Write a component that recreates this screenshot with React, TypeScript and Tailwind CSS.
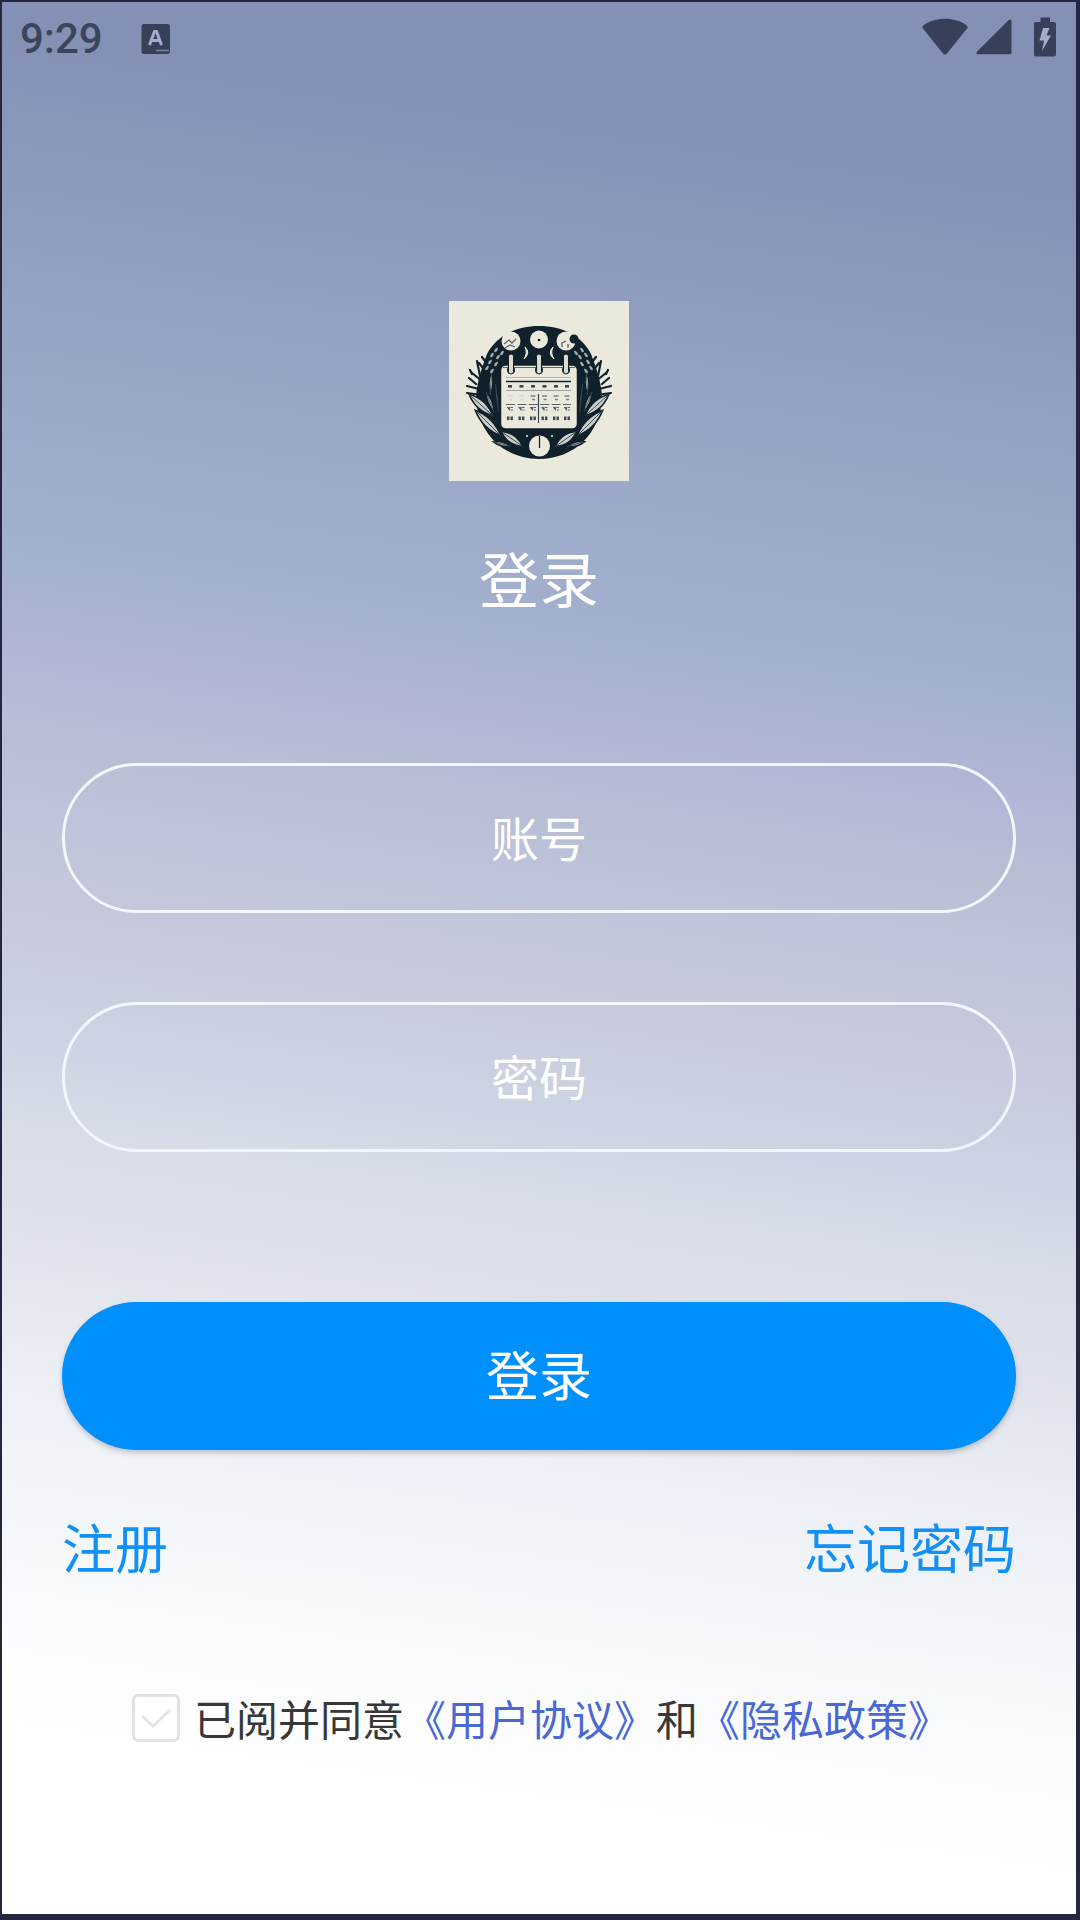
import React, { useState } from 'react';

const AppBadgeIcon: React.FC<React.SVGProps<SVGSVGElement>> = (props) => (
    <svg viewBox="0 0 30 32" fill="none" {...props}>
        <rect x="0.5" y="1" width="28.5" height="30" rx="2.5" fill="#364057" />
        <path d="M8.5 22 L13.5 8.5 H15.5 L20.5 22 M10.5 17.5 H18.5" stroke="#a3acca" strokeWidth="3" />
        <path d="M15 27.5 H28" stroke="#7d88a6" strokeWidth="1.5" />
    </svg>
);

const WifiIcon: React.FC<React.SVGProps<SVGSVGElement>> = (props) => (
    <svg viewBox="0 0 46 38" fill="#374058" {...props}>
        <path d="M1 10.5 C0 9.4 0.2 8.4 1.3 7.5 C13.5 -1.4 32.5 -1.4 44.7 7.5 C45.8 8.4 46 9.4 45 10.5 L25 35.6 C23.8 37 22.2 37 21 35.6 Z" />
    </svg>
);

const SignalIcon: React.FC<React.SVGProps<SVGSVGElement>> = (props) => (
    <svg viewBox="0 0 36 36" fill="#374058" {...props}>
        <path d="M32.5 1.2 C34 -0.2 35.5 0.4 35.5 2.4 V33 C35.5 34.6 34.8 35.3 33.2 35.3 H2.4 C0.4 35.3 -0.2 33.8 1.2 32.4 Z" />
    </svg>
);

const BatteryIcon: React.FC<React.SVGProps<SVGSVGElement>> = (props) => (
    <svg viewBox="0 0 22 40" {...props}>
        <path d="M6.5 0.5 H16 V5 H20 Q22 5 22 7 V37.5 Q22 39.5 20 39.5 H2 Q0 39.5 0 37.5 V7 Q0 5 2 5 H6.5 Z" fill="#374058" />
        <path d="M9 11 H15.5 L12.5 18.5 H17 L8 34 L10 23.5 H5.5 Z" fill="#a3acca" />
    </svg>
);

const LEAVES = [
    // cx, cy, rx, ry, angle
    [32, 104, 4, 16, -48],
    [39, 122, 4, 18, -45],
    [63, 138, 4, 13, -55],
    [41, 101, 2, 11, -22],
    [42, 82, 2, 12, 4],
    [48, 97, 1, 14, -6],
    [53, 143, 2, 9, -75],
];

const TWIGS = [
    'M38 72 L30 62 M33 80 L23 72 M30 88 L18 85 M31 75 L28 60 M27 83 L20 77 M33 94 L18 92',
    'M36 60 L33 56 M23 73 L21 69',
];

const GRAIN = [[47, 49], [43, 54], [49, 56], [41, 61], [47, 63], [38, 67], [43, 70], [53, 52]];

const LogoSide: React.FC = () => (
    <g>
        {TWIGS.map((d) => (
            <path key={d} d={d} stroke="#10212c" strokeWidth="2.2" strokeLinecap="round" fill="none" />
        ))}
        {LEAVES.map(([cx, cy, rx, ry, angle]) => (
            <g key={`${cx}-${cy}`} transform={`rotate(${angle} ${cx} ${cy})`}>
                <path
                    d={`M${cx} ${cy - ry} Q${cx + rx * 2} ${cy} ${cx} ${cy + ry} Q${cx - rx * 2} ${cy} ${cx} ${cy - ry} Z`}
                    fill="#c9cec8"
                    stroke="#10212c"
                    strokeWidth="1.6"
                />
                <path d={`M${cx} ${cy - ry} V${cy + ry}`} stroke="#3b4a52" strokeWidth="0.9" />
            </g>
        ))}
        {GRAIN.map(([x, y]) => (
            <ellipse key={`${x}-${y}`} cx={x} cy={y} rx="1.3" ry="2.6" fill="#a3adad" transform={`rotate(35 ${x} ${y})`} />
        ))}
    </g>
);

const Logo: React.FC<React.SVGProps<SVGSVGElement>> = (props) => (
    <svg viewBox="0 0 180 180" fill="none" {...props}>
        <rect width="180" height="180" fill="#ebe9dc" />
        <path d="M90 25 C113 25 133 35 142 53 C147 66 152 80 153 96 C152 132 125 158 90 158 C55 158 28 132 27 96 C28 80 33 66 38 53 C47 35 67 25 90 25 Z" fill="#10212c" />
        <LogoSide />
        <g transform="translate(180 0) scale(-1 1)">
            <LogoSide />
        </g>

        {/* moon phases */}
        <circle cx="62" cy="40" r="9.5" fill="#ebe9dc" />
        <path d="M55 43 L60 39 L63 42 L67 38 M56 47 L61 44 L66 46" stroke="#59666b" strokeWidth="1.3" />
        <circle cx="90" cy="38.5" r="9" fill="#ebe9dc" />
        <circle cx="90" cy="39" r="1.3" fill="#10212c" />
        <circle cx="117" cy="40" r="9.5" fill="#ebe9dc" />
        <circle cx="125" cy="38" r="4.5" fill="#10212c" />
        <path d="M113 46 V42 L117 40 M119 47 V43" stroke="#59666b" strokeWidth="1.3" />
        <path d="M76 46 Q82 52 75 58 Q79 52 76 46 Z" fill="#ebe9dc" stroke="#ebe9dc" />
        <path d="M104 46 Q98 52 105 58 Q101 52 104 46 Z" fill="#ebe9dc" stroke="#ebe9dc" />

        {/* calendar sheet */}
        <rect x="51.5" y="64" width="77" height="64" rx="5" fill="#ebe9dc" stroke="#10212c" strokeWidth="1.5" />
        <path d="M54 66.5 H126" stroke="#3b4a52" strokeWidth="0.8" />
        {[62, 90, 117].map((x) => (
            <g key={x}>
                <circle cx={x} cy="69" r="4" fill="#10212c" />
                <rect x={x - 2.5} y="53" width="5" height="20" rx="2.5" fill="#d9dad0" stroke="#10212c" />
            </g>
        ))}
        <path d="M57 76.5 H122" stroke="#b5b7af" />
        <path d="M57 80.5 H122" stroke="#10212c" strokeWidth="1.5" />
        <path d="M57 89.5 H122" stroke="#8b918e" strokeWidth="0.8" />
        <path d="M57 103.5 H122" stroke="#59666b" strokeDasharray="9 2.4" />
        <path d="M89.5 93 V122" stroke="#3b4a52" strokeWidth="1.2" />
        {[61, 72.5, 84, 95.5, 107, 118].map((x, i) => (
            <g key={x} fill="#3b4a52">
                <rect x={x - 2} y="84" width="4" height="2.6" />
                <path d={`M${x - 2.5} 95 h5 M${x - 1} 98.5 h3`} stroke={i < 2 ? '#d6d6ca' : '#7c8586'} strokeWidth="1.4" />
                <path d={`M${x - 3} 106.5 h2.5 v3 M${x + 0.5} 106.5 h2.5 M${x + 1} 109 h2`} stroke="#59666b" strokeWidth="1.2" />
                <rect x={x - 3} y="115.5" width="2.4" height="3.6" />
                <rect x={x + 0.5} y="115.5" width="2.4" height="3.6" />
            </g>
        ))}

        {/* lower clock */}
        <circle cx="90.5" cy="145" r="10.5" fill="#ebe9dc" />
        <path d="M90.5 135 V147" stroke="#10212c" strokeWidth="1.3" />
        <circle cx="78" cy="135" r="1" fill="#ebe9dc" />
        <circle cx="103" cy="135" r="1" fill="#ebe9dc" />
    </svg>
);

const StatusBar: React.FC = () => (
    <header className="flex h-[74px] items-center justify-between pl-[18px] pr-5">
        <div className="flex items-center gap-[38px]">
            <span className="font-[Roboto] text-[42px] leading-[48px] font-medium text-[#3b455e]">9:29</span>
            <AppBadgeIcon className="h-8 w-[30px]" />
        </div>
        <div className="flex items-center pb-1">
            <WifiIcon className="h-[38px] w-[46px]" />
            <SignalIcon className="ml-2 h-9 w-9" />
            <BatteryIcon className="ml-[22px] h-10 w-[22px]" />
        </div>
    </header>
);

const fieldClass =
    'h-[150px] w-full rounded-full border-3 border-[#f3f6fd] bg-transparent pb-1 text-center text-[48px] text-white outline-none placeholder:text-white placeholder:opacity-100';

const App: React.FC = () => {
    const [account, setAccount] = useState('');
    const [password, setPassword] = useState('');
    const [agreed, setAgreed] = useState(false);

    return (
        <div className="flex min-h-screen flex-col border-t-2 border-r-4 border-b-6 border-l-2 border-[#24253f] bg-[linear-gradient(188deg,#8490b6_0%,#8491b5_9%,#8f9ebf_18%,#9aa8c8_26%,#a3b1ce_34%,#b1b7d6_39%,#b8bfd4_43%,#bfc5da_47%,#c6c8db_51%,#cdd5e4_58%,#d8dde8_62%,#dfe2ea_67%,#eceff6_74%,#f4f7fa_81%,#fdfdfe_88%,#ffffff_91%)] font-['Noto_Sans_CJK_SC',sans-serif]">
            <StatusBar />

            <main className="flex flex-1 flex-col px-[60px] pt-[225px]">
                <Logo className="h-[180px] w-[180px] self-center" />
                <h1 className="mt-[60px] text-center text-[60px] leading-[72px] text-white">登录</h1>

                <form className="mt-[150px] flex flex-col" onSubmit={(e) => e.preventDefault()}>
                    <input
                        type="text"
                        aria-label="账号"
                        placeholder="账号"
                        value={account}
                        onChange={(e) => setAccount(e.target.value)}
                        className={fieldClass}
                    />
                    <input
                        type="password"
                        aria-label="密码"
                        placeholder="密码"
                        value={password}
                        onChange={(e) => setPassword(e.target.value)}
                        className={`mt-[89px] ${fieldClass}`}
                    />
                    <button
                        type="submit"
                        className="mt-[150px] h-[148px] w-full rounded-full bg-[#0090fd] pb-1 text-[53px] text-white shadow-[0_3px_5px_rgba(60,50,60,0.25)]"
                    >
                        登录
                    </button>

                    <div className="mt-[60px] flex justify-between text-[53px] leading-[72px] text-[#1191f5]">
                        <a href="#register">注册</a>
                        <a href="#forgot">忘记密码</a>
                    </div>

                    <div className="mt-[112px] flex items-center pl-[70px] text-[42px] leading-[48px] text-[#383838]">
                        <span className="relative h-12 w-12 shrink-0">
                            <input
                                id="agree"
                                type="checkbox"
                                checked={agreed}
                                onChange={(e) => setAgreed(e.target.checked)}
                                className="block h-12 w-12 appearance-none rounded-md border-3 border-[#e2e2e2] bg-white checked:border-[#0090fd]"
                            />
                            <svg viewBox="0 0 48 48" fill="none" className="pointer-events-none absolute inset-0">
                                <path d="M10 22 L21 32 L38 16" stroke={agreed ? '#0090fd' : '#e4e4e4'} strokeWidth="3" />
                            </svg>
                        </span>
                        <p className="ml-[14px] whitespace-nowrap">
                            <label htmlFor="agree">已阅并同意</label>
                            <a href="#terms" className="text-[#4a68d3]">《用户协议》</a>
                            和
                            <a href="#privacy" className="text-[#4a68d3]">《隐私政策》</a>
                        </p>
                    </div>
                </form>
            </main>
        </div>
    );
};

export default App;
